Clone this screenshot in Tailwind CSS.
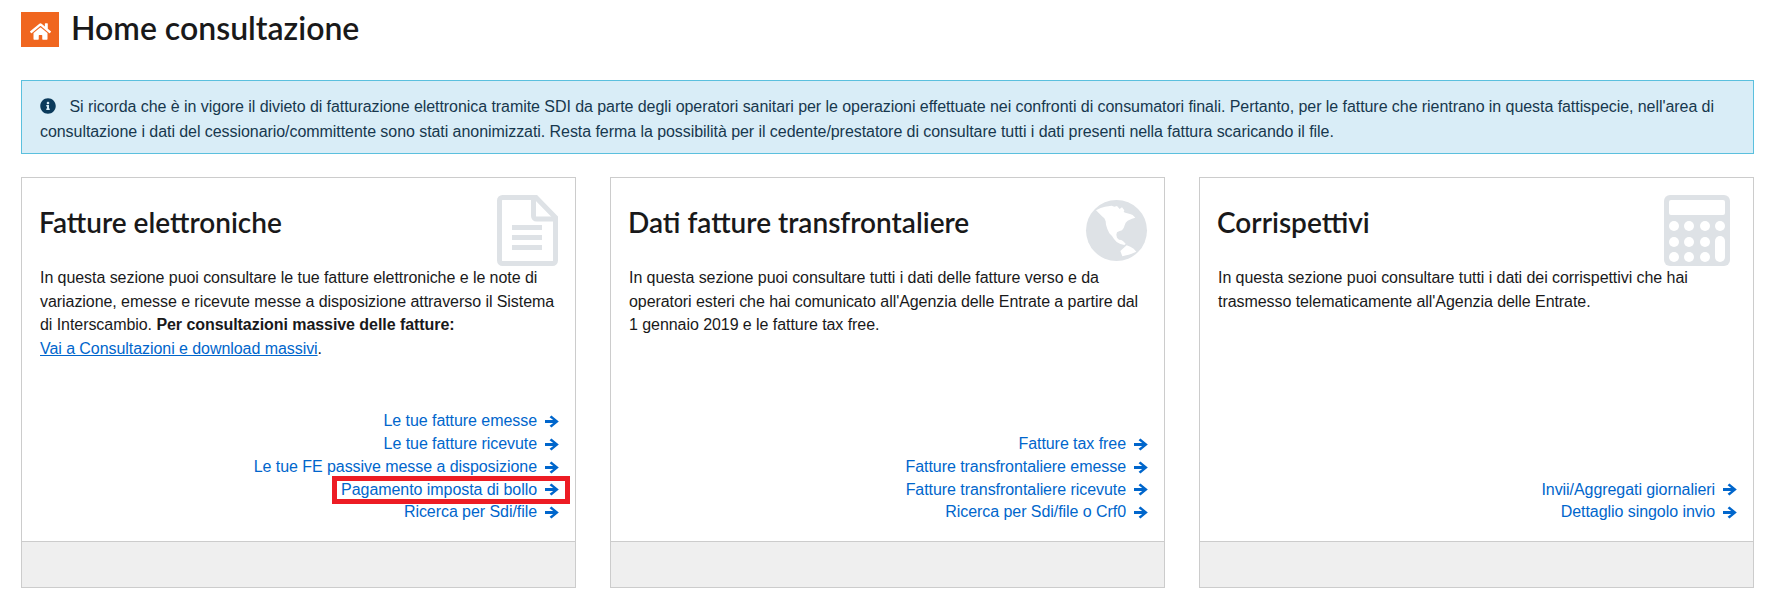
<!DOCTYPE html>
<html lang="it">
<head>
  <meta charset="UTF-8">
  <title>Home consultazione</title>
  <script src="https://cdn.jsdelivr.net/npm/@tailwindcss/browser@4"></script>
</head>
<body class="bg-white text-[#19191a] font-['Liberation_Sans',Arial,sans-serif] text-base tracking-[-0.06px] overflow-hidden">
  <div class="w-[1767px] h-[596px] pl-[21px] pr-[13px] pt-3">

    <!-- Titolo pagina -->
    <div class="flex items-center gap-[12px] h-[35px]">
      <div class="w-[38px] h-[35px] bg-[#f0661f] flex items-center justify-center">
        <svg class="w-[21px] h-[19px] mt-[3px]" viewBox="0 0 576 512" fill="#fff"><path d="M280.37 148.26L96 300.11V464a16 16 0 0 0 16 16l112.06-.29a16 16 0 0 0 15.92-16V368a16 16 0 0 1 16-16h64a16 16 0 0 1 16 16v95.64a16 16 0 0 0 16 16.05L464 480a16 16 0 0 0 16-16V300L295.67 148.26a12.19 12.19 0 0 0-15.3 0zM571.6 251.47L488 182.56V44.05a12 12 0 0 0-12-12h-56a12 12 0 0 0-12 12v72.61L318.47 43a48 48 0 0 0-61 0L4.34 251.47a12 12 0 0 0-1.6 16.9l25.5 31A12 12 0 0 0 45.15 301l235.22-193.74a12.19 12.19 0 0 1 15.3 0L530.9 301a12 12 0 0 0 16.9-1.6l25.5-31a12 12 0 0 0-1.7-16.93z"/></svg>
      </div>
      <h1 class="-mt-1 font-['Lato',sans-serif] font-semibold tracking-normal text-[32px] leading-[35px]">Home consultazione</h1>
    </div>

    <!-- Avviso -->
    <div class="mt-[33px] h-[74px] bg-[#d9edf7] border border-[#5bc0de] pl-[18px] pr-4 pt-[13px] text-[16px] leading-[25px] text-[#17384e]">
      <svg class="inline-block w-4 h-4 mr-[9px] align-[-2px]" viewBox="0 0 512 512" fill="#0b3a5b"><path d="M256 8C119.043 8 8 119.083 8 256c0 136.997 111.043 248 248 248s248-111.003 248-248C504 119.083 392.957 8 256 8zm0 110c23.196 0 42 18.804 42 42s-18.804 42-42 42-42-18.804-42-42 18.804-42 42-42zm56 254c0 6.627-5.373 12-12 12h-88c-6.627 0-12-5.373-12-12v-24c0-6.627 5.373-12 12-12h12v-64h-12c-6.627 0-12-5.373-12-12v-24c0-6.627 5.373-12 12-12h64c6.627 0 12 5.373 12 12v100h12c6.627 0 12 5.373 12 12v24z"/></svg>
      Si ricorda che è in vigore il divieto di fatturazione elettronica tramite SDI da parte degli operatori sanitari per le operazioni effettuate nei confronti di consumatori finali. Pertanto, per le fatture che rientrano in questa fattispecie, nell'area di consultazione i dati del cessionario/committente sono stati anonimizzati. Resta ferma la possibilità per il cedente/prestatore di consultare tutti i dati presenti nella fattura scaricando il file.
    </div>

    <!-- Schede -->
    <div class="mt-[23px] grid grid-cols-3 gap-[34px] h-[411px]">

      <div class="relative flex flex-col border border-[#ccc]">
        <svg class="absolute left-[475px] top-[17px] w-[61px] h-[71px]" viewBox="0 0 61 71"><g fill="none" stroke="#dee2e6" stroke-width="5"><path d="M5.5 2.5H39L58.5 22.5V65.5a3 3 0 0 1-3 3H5.5a3 3 0 0 1-3-3V5.5a3 3 0 0 1 3-3z"/><path d="M36.5 3V21a3 3 0 0 0 3 3H58"/></g><g fill="#dee2e6"><rect x="15" y="30" width="30" height="5"/><rect x="15" y="40" width="30" height="5"/><rect x="15" y="50" width="30" height="5"/></g></svg>
        <div class="flex-1 flex flex-col px-[18px]">
          <h2 class="mt-[26px] -ml-px font-['Lato',sans-serif] font-semibold tracking-normal text-[28px] leading-[36px]">Fatture elettroniche</h2>
          <p class="mt-[26px] leading-[23.7px]">In questa sezione puoi consultare le tue fatture elettroniche e le note di variazione, emesse e ricevute messe a disposizione attraverso il Sistema di Interscambio. <b>Per consultazioni massive delle fatture:</b><br><a class="text-[#0066cc] underline">Vai a Consultazioni e download massivi</a>.</p>
          <ul class="mt-auto mb-[17px] -mr-[2px] text-[#0066cc] leading-[22.7px]">
            <li class="flex justify-end items-center gap-2">Le tue fatture emesse <svg class="w-[14px] h-[13px]" viewBox="0 0 14 12" fill="#0066cc"><path d="M0 4.4H8.2L4.6 1.7 6.4 0 13.8 6 6.4 12 4.6 10.3 8.2 7.6H0z"/></svg></li>
            <li class="flex justify-end items-center gap-2">Le tue fatture ricevute <svg class="w-[14px] h-[13px]" viewBox="0 0 14 12" fill="#0066cc"><path d="M0 4.4H8.2L4.6 1.7 6.4 0 13.8 6 6.4 12 4.6 10.3 8.2 7.6H0z"/></svg></li>
            <li class="flex justify-end items-center gap-2">Le tue FE passive messe a disposizione <svg class="w-[14px] h-[13px]" viewBox="0 0 14 12" fill="#0066cc"><path d="M0 4.4H8.2L4.6 1.7 6.4 0 13.8 6 6.4 12 4.6 10.3 8.2 7.6H0z"/></svg></li>
            <li class="relative flex justify-end items-center gap-2">Pagamento imposta di bollo <svg class="w-[14px] h-[13px]" viewBox="0 0 14 12" fill="#0066cc"><path d="M0 4.4H8.2L4.6 1.7 6.4 0 13.8 6 6.4 12 4.6 10.3 8.2 7.6H0z"/></svg>
              <span class="absolute right-[-11px] top-[-3px] w-[238px] h-[28px] border-[5px] border-[#ed1c24]"></span></li>
            <li class="flex justify-end items-center gap-2">Ricerca per Sdi/file <svg class="w-[14px] h-[13px]" viewBox="0 0 14 12" fill="#0066cc"><path d="M0 4.4H8.2L4.6 1.7 6.4 0 13.8 6 6.4 12 4.6 10.3 8.2 7.6H0z"/></svg></li>
          </ul>
        </div>
        <div class="h-[46px] bg-[#efefef] border-t border-[#ccc]"></div>
      </div>

      <div class="relative flex flex-col border border-[#ccc]">
        <svg class="absolute left-[469px] top-[17px] w-[72px] h-[72px]" viewBox="0 0 216 216"><circle cx="109.5" cy="106.5" r="91.5" fill="#dee2e6"/><path fill="#fff" d="M48 46l14-7 13-4 20-3 8 3 8-2 8 9 7-5 7 9-2 5 5 2 14 4 8 3 8 8-10 3-13 6-6 6-3 8-3 8-5 7-9 3-6 3-2 7 2 9 6 6 7 1 6 8 7 4-4 3-12-3-11-6-8-9-6-9-8-8-6-13-4-13-1-10-4-9-7-6z"/><path fill="#fff" d="M118 136l10 1 9 9-7 2-9-4z"/><path fill="#fff" d="M121 168l9-8 10-9 11 4 10 6 8 9-14 6-9 3-7 2-12 3z"/></svg>
        <div class="flex-1 flex flex-col px-[18px]">
          <h2 class="mt-[26px] -ml-px font-['Lato',sans-serif] font-semibold tracking-normal text-[28px] leading-[36px]">Dati fatture transfrontaliere</h2>
          <p class="mt-[26px] leading-[23.7px]">In questa sezione puoi consultare tutti i dati delle fatture verso e da operatori esteri che hai comunicato all'Agenzia delle Entrate a partire dal 1 gennaio 2019 e le fatture tax free.</p>
          <ul class="mt-auto mb-[17px] -mr-[2px] text-[#0066cc] leading-[22.7px]">
            <li class="flex justify-end items-center gap-2">Fatture tax free <svg class="w-[14px] h-[13px]" viewBox="0 0 14 12" fill="#0066cc"><path d="M0 4.4H8.2L4.6 1.7 6.4 0 13.8 6 6.4 12 4.6 10.3 8.2 7.6H0z"/></svg></li>
            <li class="flex justify-end items-center gap-2">Fatture transfrontaliere emesse <svg class="w-[14px] h-[13px]" viewBox="0 0 14 12" fill="#0066cc"><path d="M0 4.4H8.2L4.6 1.7 6.4 0 13.8 6 6.4 12 4.6 10.3 8.2 7.6H0z"/></svg></li>
            <li class="flex justify-end items-center gap-2">Fatture transfrontaliere ricevute <svg class="w-[14px] h-[13px]" viewBox="0 0 14 12" fill="#0066cc"><path d="M0 4.4H8.2L4.6 1.7 6.4 0 13.8 6 6.4 12 4.6 10.3 8.2 7.6H0z"/></svg></li>
            <li class="flex justify-end items-center gap-2">Ricerca per Sdi/file o Crf0 <svg class="w-[14px] h-[13px]" viewBox="0 0 14 12" fill="#0066cc"><path d="M0 4.4H8.2L4.6 1.7 6.4 0 13.8 6 6.4 12 4.6 10.3 8.2 7.6H0z"/></svg></li>
          </ul>
        </div>
        <div class="h-[46px] bg-[#efefef] border-t border-[#ccc]"></div>
      </div>

      <div class="relative flex flex-col border border-[#ccc]">
        <svg class="absolute left-[464px] top-[17px] w-[66px] h-[71px]" viewBox="0 0 66 71"><rect width="66" height="71" rx="6" fill="#dee2e6"/><rect x="5" y="5" width="56" height="15" rx="2" fill="#fff"/><g fill="#fff"><circle cx="10" cy="31" r="5"/><circle cx="25" cy="31" r="5"/><circle cx="41" cy="31" r="5"/><circle cx="56" cy="31" r="5"/><circle cx="10" cy="47" r="5"/><circle cx="25" cy="47" r="5"/><circle cx="41" cy="47" r="5"/><circle cx="10" cy="62" r="5"/><circle cx="25" cy="62" r="5"/><circle cx="41" cy="62" r="5"/><rect x="51" y="41" width="10" height="26" rx="5"/></g></svg>
        <div class="flex-1 flex flex-col px-[18px]">
          <h2 class="mt-[26px] -ml-px font-['Lato',sans-serif] font-semibold tracking-normal text-[28px] leading-[36px]">Corrispettivi</h2>
          <p class="mt-[26px] leading-[23.7px]">In questa sezione puoi consultare tutti i dati dei corrispettivi che hai trasmesso telematicamente all'Agenzia delle Entrate.</p>
          <ul class="mt-auto mb-[17px] -mr-[2px] text-[#0066cc] leading-[22.7px]">
            <li class="flex justify-end items-center gap-2">Invii/Aggregati giornalieri <svg class="w-[14px] h-[13px]" viewBox="0 0 14 12" fill="#0066cc"><path d="M0 4.4H8.2L4.6 1.7 6.4 0 13.8 6 6.4 12 4.6 10.3 8.2 7.6H0z"/></svg></li>
            <li class="flex justify-end items-center gap-2">Dettaglio singolo invio <svg class="w-[14px] h-[13px]" viewBox="0 0 14 12" fill="#0066cc"><path d="M0 4.4H8.2L4.6 1.7 6.4 0 13.8 6 6.4 12 4.6 10.3 8.2 7.6H0z"/></svg></li>
          </ul>
        </div>
        <div class="h-[46px] bg-[#efefef] border-t border-[#ccc]"></div>
      </div>

    </div>
  </div>
</body>
</html>
